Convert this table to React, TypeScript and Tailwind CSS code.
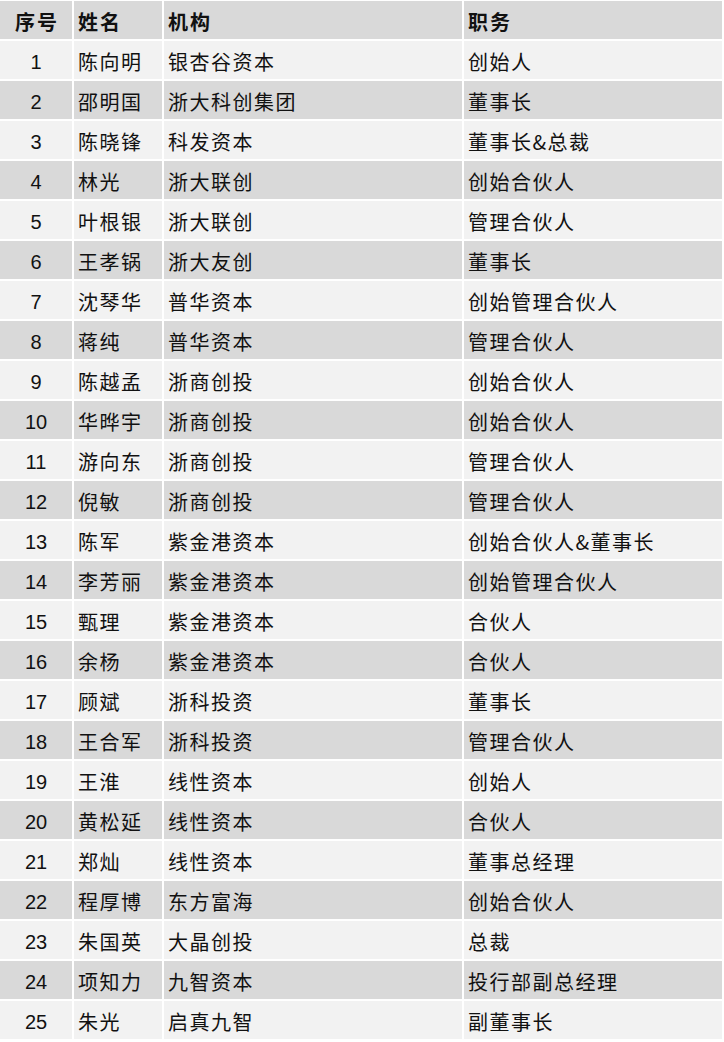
import React from "react";

const rows: [string, string, string][] = [
  ["陈向明", "银杏谷资本", "创始人"],
  ["邵明国", "浙大科创集团", "董事长"],
  ["陈晓锋", "科发资本", "董事长&总裁"],
  ["林光", "浙大联创", "创始合伙人"],
  ["叶根银", "浙大联创", "管理合伙人"],
  ["王孝锅", "浙大友创", "董事长"],
  ["沈琴华", "普华资本", "创始管理合伙人"],
  ["蒋纯", "普华资本", "管理合伙人"],
  ["陈越孟", "浙商创投", "创始合伙人"],
  ["华晔宇", "浙商创投", "创始合伙人"],
  ["游向东", "浙商创投", "管理合伙人"],
  ["倪敏", "浙商创投", "管理合伙人"],
  ["陈军", "紫金港资本", "创始合伙人&董事长"],
  ["李芳丽", "紫金港资本", "创始管理合伙人"],
  ["甄理", "紫金港资本", "合伙人"],
  ["余杨", "紫金港资本", "合伙人"],
  ["顾斌", "浙科投资", "董事长"],
  ["王合军", "浙科投资", "管理合伙人"],
  ["王淮", "线性资本", "创始人"],
  ["黄松延", "线性资本", "合伙人"],
  ["郑灿", "线性资本", "董事总经理"],
  ["程厚博", "东方富海", "创始合伙人"],
  ["朱国英", "大晶创投", "总裁"],
  ["项知力", "九智资本", "投行部副总经理"],
  ["朱光", "启真九智", "副董事长"],
];

const cjk = "font-['Noto_Sans_CJK_SC',sans-serif]";

export default function App() {
  return (
    <div className="w-[724px] h-[1042px] bg-white pt-[1px]">
      <div className="grid grid-cols-[72px_88px_298px_258px] gap-[2px] text-[#111]">
        <div className="h-[38px] bg-[#d9d9d9] flex items-center justify-center pt-[3px]">
          <span className={`${cjk} text-[20px] font-bold tracking-[2px] pl-[2px]`}>序号</span>
        </div>
        <div className="h-[38px] bg-[#d9d9d9] flex items-center pl-[4px] pt-[3px]">
          <span className={`${cjk} text-[20px] font-bold tracking-[2px]`}>姓名</span>
        </div>
        <div className="h-[38px] bg-[#d9d9d9] flex items-center pl-[4px] pt-[3px]">
          <span className={`${cjk} text-[20px] font-bold tracking-[2px]`}>机构</span>
        </div>
        <div className="h-[38px] bg-[#d9d9d9] flex items-center pl-[4px] pt-[3px]">
          <span className={`${cjk} text-[20px] font-bold tracking-[2px]`}>职务</span>
        </div>
        {rows.map(([name, org, title], i) => {
          const bg = i % 2 === 0 ? "bg-[#f2f2f2]" : "bg-[#d9d9d9]";
          return (
            <React.Fragment key={i}>
              <div className={`h-[38px] ${bg} flex items-center justify-center pt-[4px]`}>
                <span className="font-['Liberation_Sans',Arial,sans-serif] text-[20px]">{i + 1}</span>
              </div>
              <div className={`h-[38px] ${bg} flex items-center pl-[4px] pt-[4px]`}>
                <span className={`${cjk} text-[20px] tracking-[1.5px]`}>{name}</span>
              </div>
              <div className={`h-[38px] ${bg} flex items-center pl-[4px] pt-[4px]`}>
                <span className={`${cjk} text-[20px] tracking-[1.5px]`}>{org}</span>
              </div>
              <div className={`h-[38px] ${bg} flex items-center pl-[4px] pt-[4px]`}>
                <span className={`${cjk} text-[20px] tracking-[1.5px]`}>{title}</span>
              </div>
            </React.Fragment>
          );
        })}
      </div>
    </div>
  );
}
